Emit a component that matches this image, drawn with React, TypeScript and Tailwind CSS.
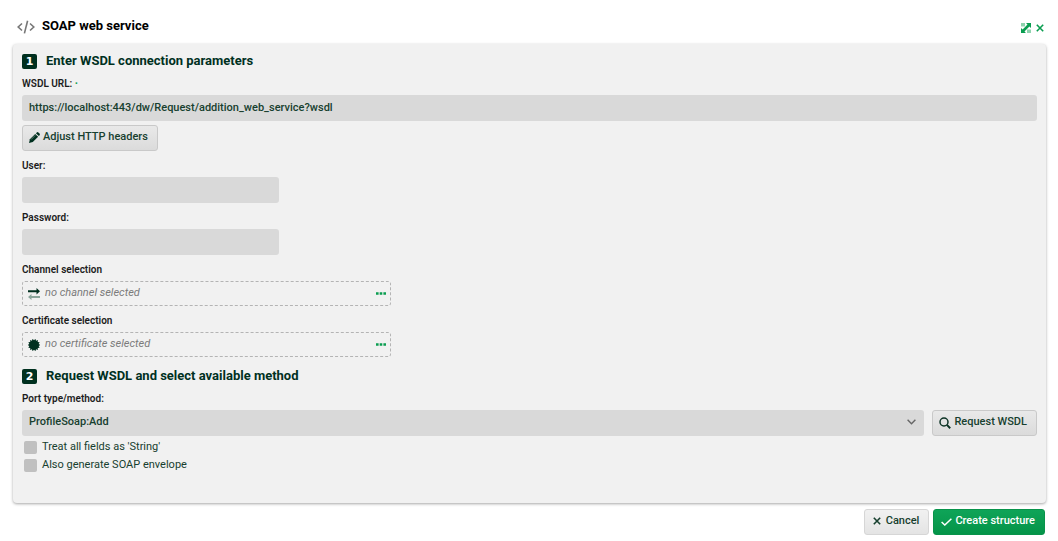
import { useState } from 'react'
import type { ReactNode } from 'react'
import { clsx } from 'clsx'

const fieldClass =
    'block h-[26px] rounded-[3px] bg-[#d9d9d9] px-[7px] pb-[2px] text-[11px] font-medium text-[#17402f] outline-none focus:ring-1 focus:ring-[#0a9d50]'

function CodeIcon() {
    return (
        <svg className="mt-[2px]" width="18" height="14" viewBox="0 0 18 14" fill="none" stroke="#777777" strokeWidth="1.6" aria-hidden="true">
            <path d="M5 3.5 1.2 7 5 10.5M13 3.5 16.8 7 13 10.5" />
            <path d="M10.6 0.8 7.4 13.4" />
        </svg>
    )
}

function PencilIcon() {
    return (
        <svg className="mt-px" width="11" height="11" viewBox="0 0 11 11" fill="#00301f" aria-hidden="true">
            <path d="M0 11 .9 7.2 6.2 1.9 9.1 4.8 3.8 10.1Z" />
            <path d="M6.9 1.2 7.8.4Q8.6-.2 9.4.5L10.5 1.6Q11.2 2.4 10.6 3.2L9.8 4.1Z" />
            <path d="M2 7.6 6.3 3.3" stroke="#7f9c90" strokeWidth=".7" />
        </svg>
    )
}

function ChannelIcon() {
    return (
        <svg width="12" height="12" viewBox="0 0 12 12" aria-hidden="true">
            <path d="M0 2.2H8.5V0L12 3.2 8.5 6.4V4.2H0Z" fill="#00301f" />
            <path d="M12 8.1H3.5V6L0 9.1 3.5 12V9.9H12Z" fill="#8ba69b" />
        </svg>
    )
}

function CertificateIcon() {
    // fourteen-tooth seal
    const points = Array.from({ length: 28 }, (_, i) => {
        const r = i % 2 ? 5 : 6.6
        const a = (i * Math.PI) / 14
        return `${6 + r * Math.cos(a)},${6 + r * Math.sin(a)}`
    }).join(' ')
    return (
        <svg width="12" height="12" viewBox="-0.3 -0.3 12.6 12.6" fill="#00301f" aria-hidden="true">
            <polygon points={points} />
        </svg>
    )
}

function SearchIcon() {
    return (
        <svg className="mt-px" width="12" height="12" viewBox="0 0 12 12" fill="none" stroke="#0d3325" aria-hidden="true">
            <circle cx="5" cy="5" r="4" strokeWidth="1.5" />
            <path d="M7.9 7.9 11.2 11.2" strokeWidth="2" />
        </svg>
    )
}

function CrossIcon({ size }: { size: number }) {
    return (
        <svg width={size} height={size} viewBox="0 0 8 8" fill="none" stroke="currentColor" strokeWidth="1.6" aria-hidden="true">
            <path d="M.8.8 7.2 7.2M7.2.8.8 7.2" />
        </svg>
    )
}

function CheckIcon() {
    return (
        <svg className="mt-px" width="11" height="8" viewBox="0 0 11 8" fill="none" stroke="white" strokeWidth="1.5" aria-hidden="true">
            <path d="M.6 4 3.8 7 10.4.7" />
        </svg>
    )
}

function ExpandIcon() {
    return (
        <svg width="10" height="10" viewBox="0 0 10 10" aria-hidden="true">
            <path d="M0 0H4V3.5H0ZM6 6.5H10V10H6Z" fill="#8fd3ae" />
            <path d="M5 0H10V5L8.4 3.5 3.5 8.4 5 10H0V5L1.6 6.5 6.5 1.6Z" fill="#0a9d50" />
        </svg>
    )
}

function StepHeading({ step, children }: { step: number; children: ReactNode }) {
    return (
        <h2 className="flex items-center gap-[9px] text-[13px] leading-[17px] font-bold text-[#00301f]">
            <span className="mt-px flex size-[15px] items-center justify-center rounded-[2px] bg-[#00301f] font-['DejaVu_Sans',sans-serif] text-[11px] font-bold text-white">
                {step}
            </span>
            {children}
        </h2>
    )
}

function Label({ htmlFor, children }: { htmlFor: string; children: ReactNode }) {
    return (
        <label htmlFor={htmlFor} className="mt-[7px] mb-[3px] block text-[10px] leading-4 font-semibold text-[#1c1c1c]">
            {children}
        </label>
    )
}

function Button({ className, children }: { className?: string; children: ReactNode }) {
    return (
        <button
            type="button"
            className={clsx(
                'flex h-[26px] shrink-0 items-center rounded-[3px] border pb-[2px] text-[11px] font-medium whitespace-nowrap',
                className,
            )}
        >
            {children}
        </button>
    )
}

function Picker({ id, icon, placeholder }: { id: string; icon: ReactNode; placeholder: string }) {
    return (
        <button
            id={id}
            type="button"
            className="flex h-[25px] w-full max-w-[369px] items-center gap-[5px] rounded-[3px] border border-dashed border-[#b4b4b4] pr-[4px] pl-[5px] text-[11px] text-[#7b7b7b] italic"
        >
            {icon}
            <span className="pb-px">{placeholder}</span>
            <svg className="ml-auto" width="10" height="3" viewBox="0 0 10 3" fill="#0a9d50" aria-hidden="true">
                <path d="M0 .3H2.6V2.8H0ZM3.7.3H6.3V2.8H3.7ZM7.4.3H10V2.8H7.4Z" />
            </svg>
        </button>
    )
}

function Option({ label, checked, onChange }: { label: string; checked: boolean; onChange: (value: boolean) => void }) {
    return (
        <label className="flex h-[18px] items-center gap-[5px] pl-[2px] text-[11px] text-[#17402f]">
            <input
                type="checkbox"
                checked={checked}
                onChange={(e) => onChange(e.target.checked)}
                className="size-[13px] appearance-none rounded-[2px] bg-[#c0c0c0] checked:bg-[#0a9d50]"
            />
            {label}
        </label>
    )
}

export default function App() {
    const [url, setUrl] = useState('https://localhost:443/dw/Request/addition_web_service?wsdl')
    const [asString, setAsString] = useState(false)
    const [envelope, setEnvelope] = useState(false)

    return (
        <div className="bg-white pt-4 pr-3 pb-1 pl-[13px] font-['Roboto',sans-serif]">
            <header className="flex h-7 items-start justify-between pr-[2px] pl-1">
                <div className="flex items-center gap-[7px]">
                    <CodeIcon />
                    <h1 className="text-[13px] leading-5 font-bold text-black">SOAP web service</h1>
                </div>
                <div className="flex items-center gap-[5px] pt-[7px] text-[#0a9d50]">
                    <button type="button" aria-label="Maximize">
                        <ExpandIcon />
                    </button>
                    <button type="button" aria-label="Close">
                        <CrossIcon size={8} />
                    </button>
                </div>
            </header>

            <main className="rounded-[4px] bg-[#f1f1f1] px-[9px] pt-2 pb-[29px] shadow-[0_1px_3px_rgba(0,0,0,0.35)]">
                <StepHeading step={1}>Enter WSDL connection parameters</StepHeading>
                <Label htmlFor="url">
                    WSDL URL: <span className="font-black text-[#0a9d50]">·</span>
                </Label>
                <input id="url" className={clsx(fieldClass, 'w-full')} value={url} onChange={(e) => setUrl(e.target.value)} />
                <Button className="mt-[4px] gap-[3px] border-[#c9c9c9] bg-linear-to-b from-[#e9e9e9] to-[#dbdbdb] pr-[9px] pl-[6px] text-[#17402f]">
                    <PencilIcon />
                    Adjust HTTP headers
                </Button>

                <Label htmlFor="user">User:</Label>
                <input id="user" className={clsx(fieldClass, 'w-[257px]')} />
                <Label htmlFor="password">Password:</Label>
                <input id="password" type="password" className={clsx(fieldClass, 'w-[257px]')} />
                <Label htmlFor="channel">Channel selection</Label>
                <Picker id="channel" icon={<ChannelIcon />} placeholder="no channel selected" />
                <Label htmlFor="certificate">Certificate selection</Label>
                <Picker id="certificate" icon={<CertificateIcon />} placeholder="no certificate selected" />

                <div className="mt-[10px]">
                    <StepHeading step={2}>Request WSDL and select available method</StepHeading>
                </div>
                <Label htmlFor="method">Port type/method:</Label>
                <div className="flex gap-2">
                    <div className="relative flex-1">
                        <select id="method" className={clsx(fieldClass, 'w-full appearance-none')}>
                            <option>ProfileSoap:Add</option>
                        </select>
                        <svg
                            className="pointer-events-none absolute top-[9px] right-[8px]"
                            width="9"
                            height="6"
                            viewBox="0 0 9 6"
                            fill="none"
                            stroke="#666666"
                            strokeWidth="1.4"
                            aria-hidden="true"
                        >
                            <path d="M.6.8 4.5 4.7 8.4.8" />
                        </svg>
                    </div>
                    <Button className="gap-[3px] border-[#c9c9c9] bg-linear-to-b from-[#e9e9e9] to-[#dbdbdb] pr-[9px] pl-[6px] text-[#17402f]">
                        <SearchIcon />
                        Request WSDL
                    </Button>
                </div>
                <div className="mt-[2px]">
                    <Option label="Treat all fields as 'String'" checked={asString} onChange={setAsString} />
                    <Option label="Also generate SOAP envelope" checked={envelope} onChange={setEnvelope} />
                </div>
            </main>

            <footer className="mt-[6px] flex justify-end gap-[4px] pr-px">
                <Button className="gap-[5px] border-[#d6d6d6] bg-linear-to-b from-[#f1f1f1] to-[#e4e4e4] pr-[9px] pl-[8px] text-[#17402f]">
                    <CrossIcon size={8} />
                    Cancel
                </Button>
                <Button className="gap-[3px] border-[#08934a] bg-linear-to-b from-[#0fa458] to-[#049448] pr-[9px] pl-[7px] text-white">
                    <CheckIcon />
                    Create structure
                </Button>
            </footer>
        </div>
    )
}
